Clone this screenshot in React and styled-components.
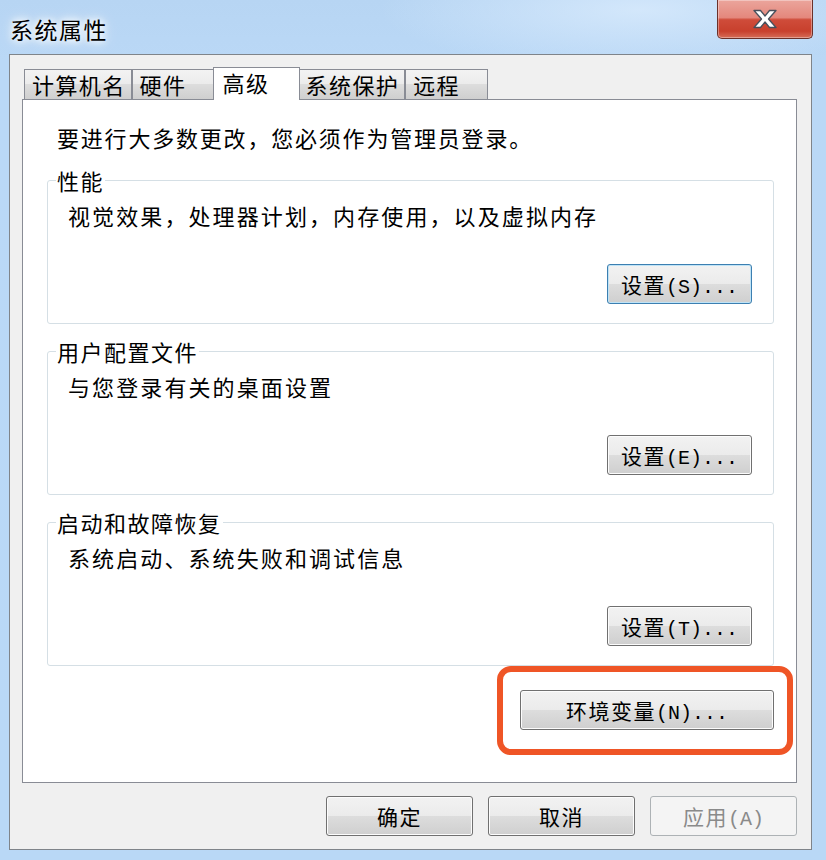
import React from 'react'
import styled, { createGlobalStyle } from 'styled-components'

const CJK = `"Noto Sans CJK SC", "Noto Sans", sans-serif`

const GlobalStyle = createGlobalStyle`
    html, body {
        margin: 0;
        padding: 0;
    }
    body {
        width: 826px;
        height: 860px;
        overflow: hidden;
        background: #b9d8f6;
    }
`

const Frame = styled.div`
    box-sizing: border-box;
    width: 826px;
    height: 860px;
    display: flex;
    flex-direction: column;
    padding: 0 14px 10px 9px;
    background:
        radial-gradient(ellipse 260px 60px at 640px 10px, rgba(214, 233, 252, .9), rgba(214, 233, 252, 0)),
        linear-gradient(#b7d5f3, #bad8f6 60px, #b9d8f6);
    font-family: ${CJK};
    color: #000;
`

const TitleBar = styled.div`
    flex: none;
    height: 54px;
    display: flex;
    justify-content: space-between;
    align-items: flex-start;
`

const Caption = styled.div`
    margin: 15px 0 0 1px;
    font-size: 23px;
    line-height: 28px;
    letter-spacing: 1.5px;
    text-shadow: 0 0 6px #fff, 0 0 10px #fff, 0 0 16px rgba(255, 255, 255, .85);
`

const CloseButton = styled.button`
    box-sizing: border-box;
    width: 96px;
    height: 39px;
    padding: 0;
    margin-right: -1px;
    border: 1px solid #6b3029;
    border-top: none;
    border-radius: 0 0 5px 5px;
    display: flex;
    align-items: center;
    justify-content: center;
    background: linear-gradient(#eba59c 0%, #e4887d 46%, #cf4c3a 52%, #c8402d 82%, #d66d58 100%);
    box-shadow: inset 0 0 0 1px rgba(255, 255, 255, .35);
`

const Client = styled.div`
    flex: 1;
    display: flex;
    flex-direction: column;
    background: #f0f0f0;
    border: 1px solid #7f848a;
    padding: 12px 14px 13px 12px;
`

const TabRow = styled.div`
    flex: none;
    height: 32px;
    display: flex;
    align-items: flex-end;
    padding-left: 2px;
`

const Tab = styled.div`
    box-sizing: border-box;
    position: relative;
    z-index: ${p => (p.$active ? 1 : 0)};
    height: ${p => (p.$active ? 33 : 30)}px;
    min-width: ${p => (p.$active ? 87 : 83)}px;
    margin: 0 ${p => (p.$active ? -2 : 0)}px ${p => (p.$active ? -1 : 0)}px;
    padding: 0 5px 0 ${p => (p.$active ? 9 : 7)}px;
    border: 1px solid #898c95;
    border-bottom: none;
    background: ${p => (p.$active
        ? '#fff'
        : 'linear-gradient(#f3f3f3 0%, #ebebeb 50%, #dddddd 50%, #cfcfcf 100%)')};
    font-size: 22px;
    line-height: 29px;
    letter-spacing: 1.4px;
    white-space: nowrap;
`

const Panel = styled.div`
    flex: 1;
    display: flex;
    flex-direction: column;
    background: #fff;
    border: 1px solid #898c95;
    padding: 24px 22px 0 24px;
`

const Intro = styled.div`
    margin-left: 10px;
    font-size: 22px;
    line-height: 26px;
    letter-spacing: 1.8px;
`

const Group = styled.fieldset`
    margin: ${p => (p.$first ? 17 : 14)}px 0 0;
    padding: 0;
    min-width: 0;
    border: 1px solid #d5dfe5;
    border-radius: 3px;
`

const Legend = styled.legend`
    margin-left: 8px;
    padding: 0 1px;
    font-size: 22px;
    line-height: 26px;
    letter-spacing: 1.5px;
`

const GroupBody = styled.div`
    display: flex;
    flex-direction: column;
    padding: 9px 21px 19px 20px;
`

const Description = styled.div`
    font-size: 22px;
    line-height: 26px;
    letter-spacing: 2.1px;
`

const ButtonRow = styled.div`
    display: flex;
    justify-content: flex-end;
    margin-top: ${p => p.$top || 0}px;
`

const Button = styled.button`
    box-sizing: border-box;
    position: relative;
    width: ${p => p.$width}px;
    height: 40px;
    padding: 0;
    border: 1px solid ${p => (p.$disabled ? '#adb2b5' : p.$default ? '#3c7fb1' : '#707070')};
    border-radius: 3px;
    background: ${p => (p.$disabled
        ? '#f4f4f4'
        : 'linear-gradient(#f2f2f2 0%, #ebebeb 50%, #dddddd 50%, #cfcfcf 100%)')};
    box-shadow: inset 0 0 0 1px ${p => (p.$default ? '#bfe3f6' : p.$disabled ? '#f4f4f4' : '#fcfcfc')};
    font-family: ${CJK};
    font-size: 21px;
    line-height: 38px;
    letter-spacing: 1.5px;
    color: ${p => (p.$disabled ? '#8a8a8a' : '#000')};
    white-space: nowrap;
`

const Hotkey = styled.span`
    font-family: "Liberation Mono", "DejaVu Sans Mono", monospace;
    font-size: 20px;
    letter-spacing: 0;
`

const EnvSlot = styled.div`
    position: relative;
    display: flex;
    align-self: flex-end;
    margin-top: 24px;
`

const Highlight = styled.div`
    position: absolute;
    top: -24px;
    bottom: -25px;
    left: -23px;
    right: -19px;
    border: 6px solid #ef5526;
    border-radius: 14px;
    pointer-events: none;
`

const Footer = styled.div`
    flex: none;
    display: flex;
    justify-content: flex-end;
    gap: 15px;
    margin-top: 13px;
`

const CloseGlyph = () => (
    <svg width="26" height="20" viewBox="0 0 26 20">
        <polygon
            points="2,1.5 8.5,1.5 13,7 17.5,1.5 24,1.5 16.5,10 24,18.5 17.5,18.5 13,13 8.5,18.5 2,18.5 9.5,10"
            fill="#fff"
            stroke="#47505c"
            strokeWidth="1.3"
            strokeLinejoin="round"
        />
    </svg>
)

const tabs = ['计算机名', '硬件', '高级', '系统保护', '远程']

const groups = [
    { title: '性能', text: '视觉效果，处理器计划，内存使用，以及虚拟内存', key: 'S', isDefault: true },
    { title: '用户配置文件', text: '与您登录有关的桌面设置', key: 'E' },
    { title: '启动和故障恢复', text: '系统启动、系统失败和调试信息', key: 'T' },
]

const App = () => {
    return (
        <>
            <GlobalStyle />
            <Frame>
                <TitleBar>
                    <Caption>系统属性</Caption>
                    <CloseButton aria-label="关闭"><CloseGlyph /></CloseButton>
                </TitleBar>
                <Client>
                    <TabRow>
                        {tabs.map(t => (
                            <Tab key={t} $active={t === '高级'}>{t}</Tab>
                        ))}
                    </TabRow>
                    <Panel>
                        <Intro>要进行大多数更改，您必须作为管理员登录。</Intro>
                        {groups.map((g, i) => (
                            <Group key={g.title} $first={i === 0}>
                                <Legend>{g.title}</Legend>
                                <GroupBody>
                                    <Description>{g.text}</Description>
                                    <ButtonRow $top={36}>
                                        <Button $width={145} $default={g.isDefault}>
                                            设置<Hotkey>({g.key})...</Hotkey>
                                        </Button>
                                    </ButtonRow>
                                </GroupBody>
                            </Group>
                        ))}
                        <EnvSlot>
                            <Button $width={254}>环境变量<Hotkey>(N)...</Hotkey></Button>
                            <Highlight />
                        </EnvSlot>
                    </Panel>
                    <Footer>
                        <Button $width={147}>确定</Button>
                        <Button $width={147}>取消</Button>
                        <Button $width={147} $disabled disabled>应用<Hotkey>(A)</Hotkey></Button>
                    </Footer>
                </Client>
            </Frame>
        </>
    )
}

export default App
